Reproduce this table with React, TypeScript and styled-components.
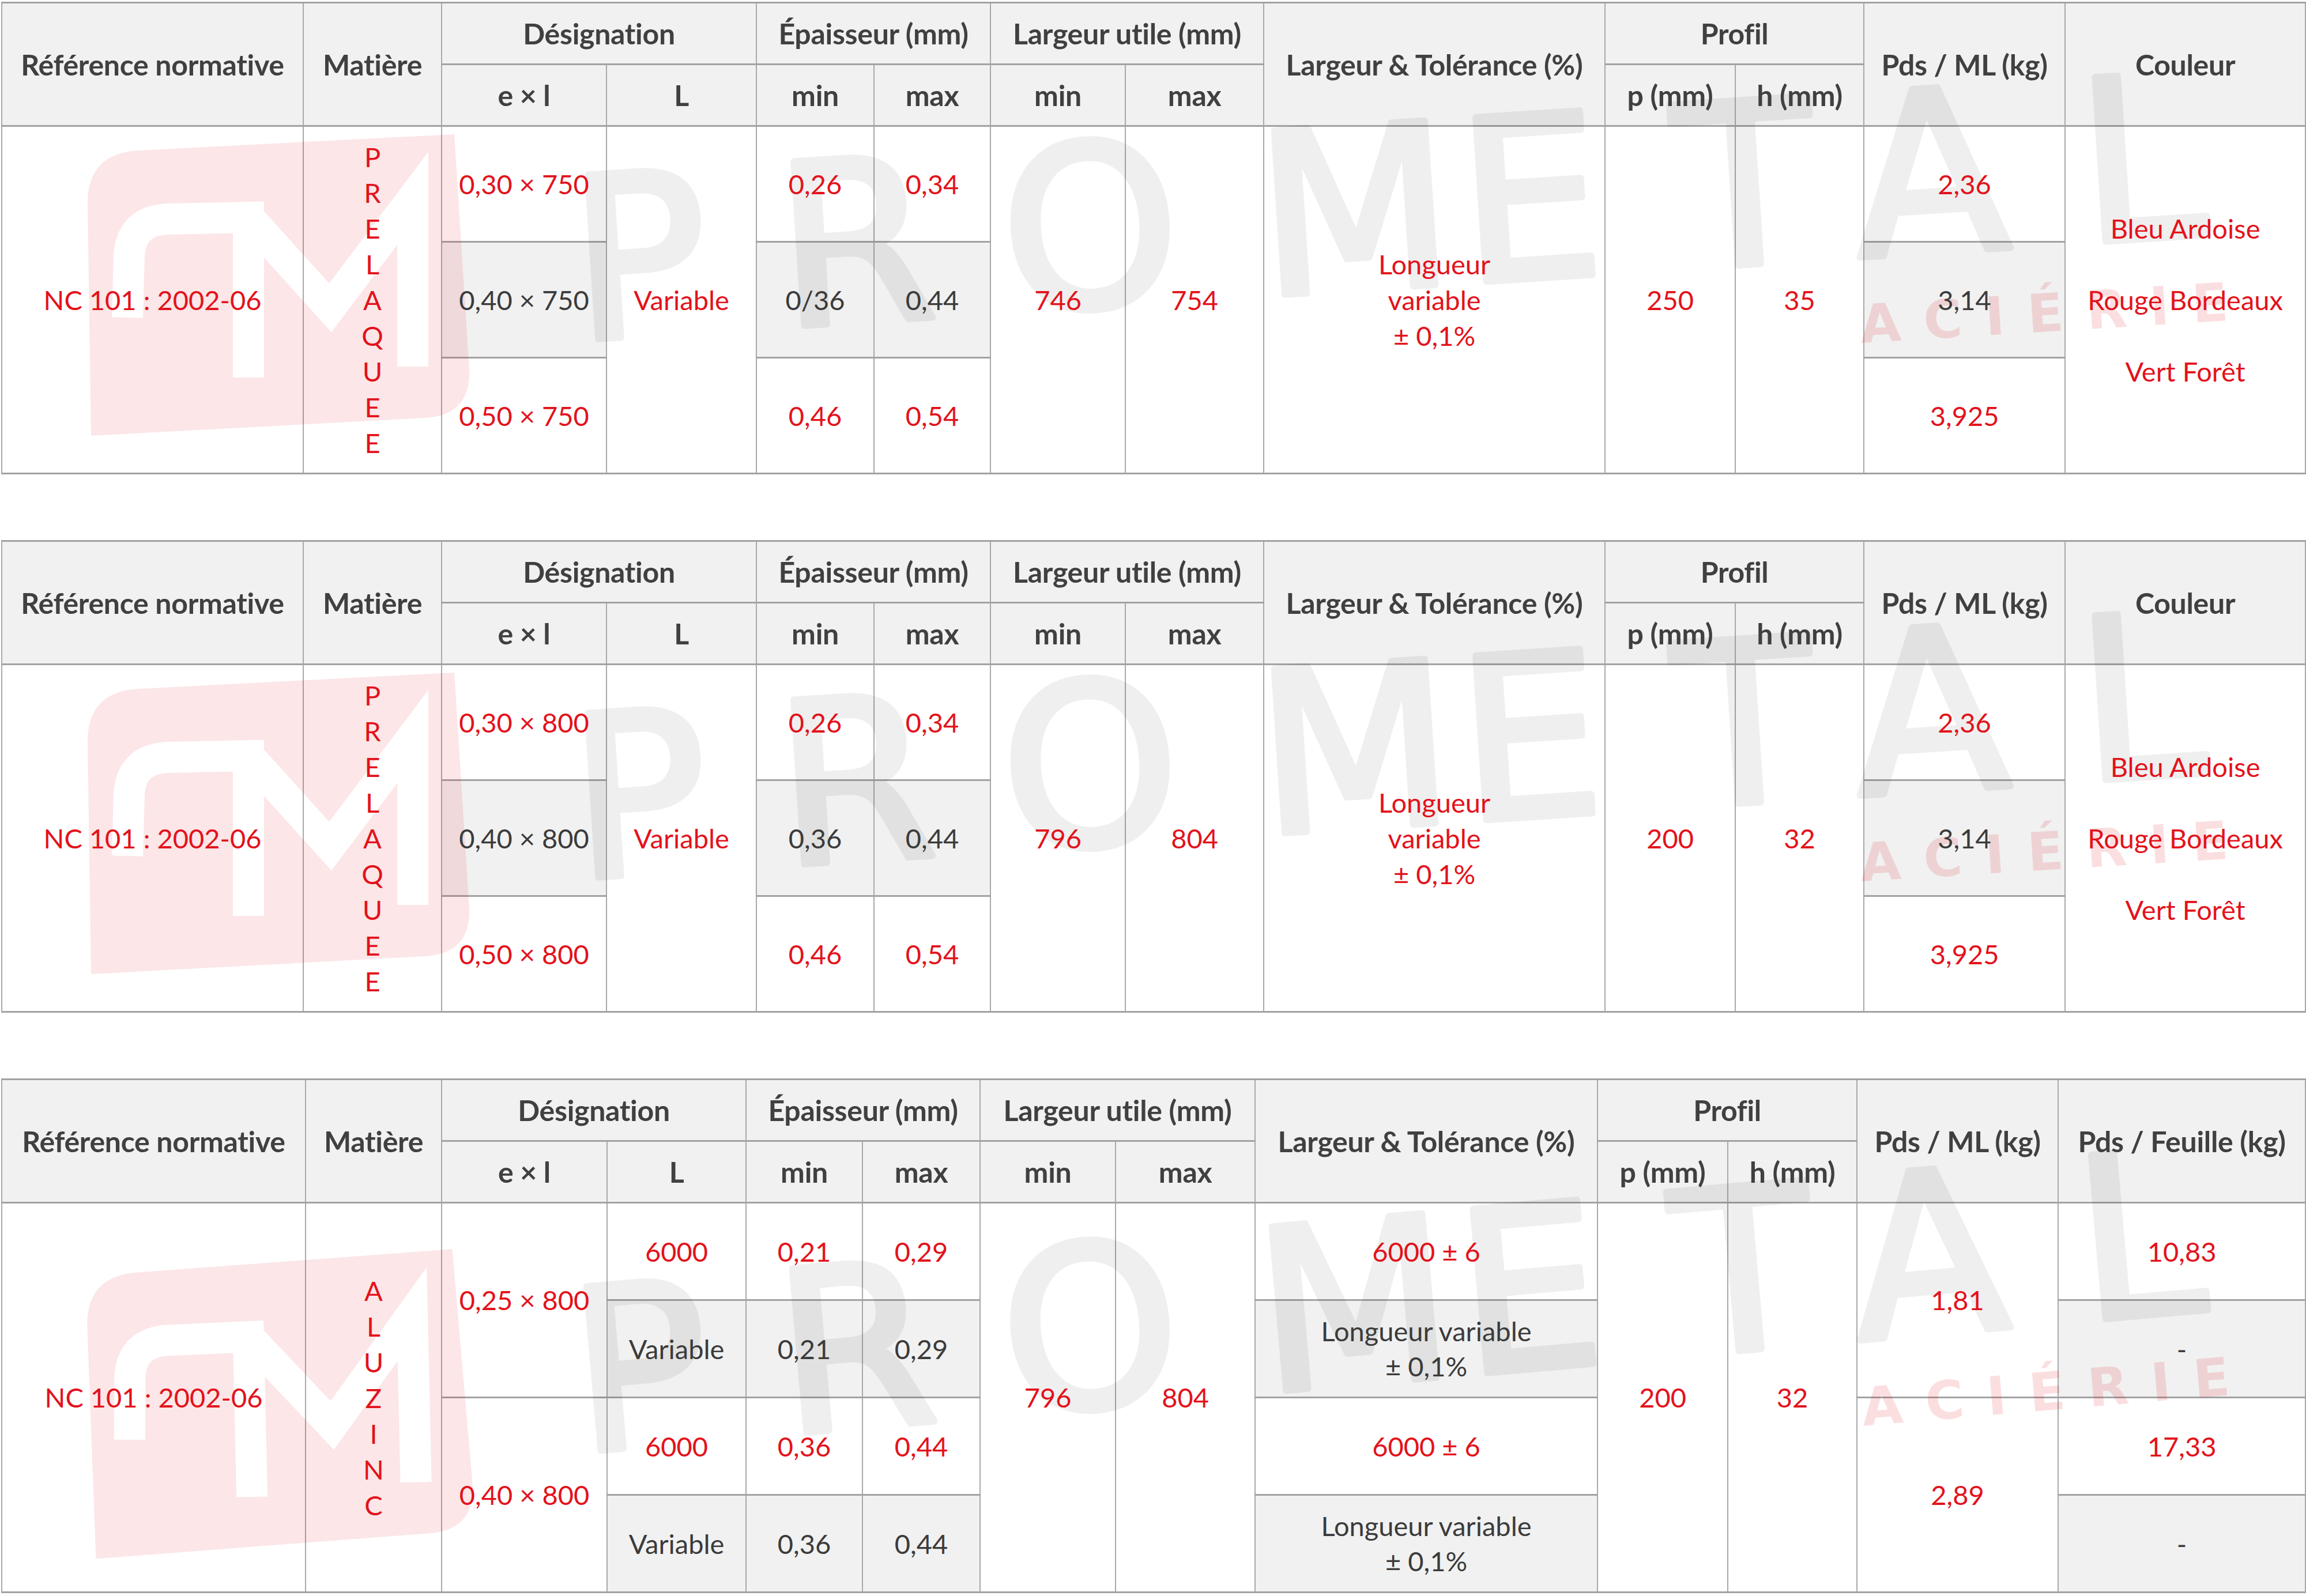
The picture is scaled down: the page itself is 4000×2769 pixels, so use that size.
import React from 'react';
import styled, { createGlobalStyle } from 'styled-components';

const GlobalStyle = createGlobalStyle`
  html, body { margin: 0; padding: 0; background: #ffffff; }
  body { font-family: Lato, "Noto Sans", sans-serif; }
`;

const RED = '#e3121b';
const DARK = '#3b3b3b';
const LINE_H = '#a2a2a2';
const LINE_V = '#a9a9a9';

const Page = styled.div`
  display: flex;
  flex-direction: column;
  gap: 114px;
  padding: 3px 2px 0 2px;
  width: 3996px;
`;

const TableWrap = styled.div`
  position: relative;
  width: 3996px;
`;

const Table = styled.table`
  width: 3996px;
  border-collapse: collapse;
  table-layout: fixed;
  font-family: Lato, "Noto Sans", sans-serif;
`;

const HeadRow = styled.tr`
  height: 107px;
`;

const BodyRow = styled.tr<{ $h: number }>`
  height: ${(p) => p.$h}px;
`;

const Th = styled.th`
  background: #f1f1f1;
  color: #404040;
  font-weight: 700;
  font-size: 50px;
  letter-spacing: -0.3px;
  text-align: center;
  vertical-align: middle;
  padding: 0;
  white-space: nowrap;
  border-top: 3px solid ${LINE_H};
  border-bottom: 3px solid ${LINE_H};
  border-left: 2px solid ${LINE_V};
  border-right: 2px solid ${LINE_V};
`;

const Td = styled.td<{ $shade?: boolean; $dark?: boolean; $lh?: number }>`
  background: ${(p) => (p.$shade ? '#f1f1f1' : '#ffffff')};
  color: ${(p) => (p.$dark ? DARK : RED)};
  font-size: 47px;
  font-weight: 400;
  line-height: ${(p) => (p.$lh ? `${p.$lh}px` : '1.2')};
  text-align: center;
  vertical-align: middle;
  padding: 0;
  white-space: nowrap;
  border-top: 3px solid ${LINE_H};
  border-bottom: 3px solid ${LINE_H};
  border-left: 2px solid ${LINE_V};
  border-right: 2px solid ${LINE_V};
`;

const Label = styled.span`
  position: relative;
  z-index: 2;
  display: inline-block;
`;

const VerticalWord = styled.span`
  position: relative;
  z-index: 2;
  display: inline-flex;
  flex-direction: column;
  align-items: center;
  line-height: 62px;
`;

const WatermarkSvg = styled.svg`
  position: absolute;
  left: 0;
  top: 0;
  z-index: 1;
  pointer-events: none;
  overflow: visible;
`;

type Cell = {
  text: string;
  dark?: boolean;
  shade?: boolean;
  rs?: number;
  lh?: number;
  vertical?: boolean;
};

type TableSpec = {
  id: string;
  cols: number[];
  lastHead: string;
  rowH: number;
  rows: Cell[][];
  wmHeight: number;
  tilt: number;
};

const LETTERS: [string, number][] = [
  ['P', 1116],
  ['R', 1492],
  ['O', 1900],
  ['M', 2360],
  ['E', 2665],
  ['T', 3037],
  ['A', 3360],
  ['L', 3727],
];

const Watermark: React.FC<{ id: string; height: number; tilt: number }> = ({ id, height, tilt }) => (
  <WatermarkSvg width={3996} height={height} viewBox={`0 0 3996 ${height}`}>
    <defs>
      <mask id={id} maskUnits="userSpaceOnUse" x={0} y={0} width={3996} height={height}>
        <rect x={0} y={0} width={3996} height={height} fill="#ffffff" />
        <path
          d="M219 548 L222 440 Q226 379 290 377 L429 374 L429 652 M429 374 L571 531 L714 341 L714 633"
          stroke="#000000"
          strokeWidth={54}
          strokeLinejoin="miter"
          fill="none"
        />
      </mask>
    </defs>
    <g transform={`rotate(${tilt} 3700 420)`}>
      <path
        d="M156 753 L150 350 Q150 262 240 258 L786 230 L812 640 Q814 718 735 722 Z"
        fill="#e30613"
        fillOpacity={0.1}
        mask={`url(#${id})`}
      />
      <g opacity={0.06}>
        <g
          transform="rotate(-3.7 957 590)"
          fill="#000000"
          stroke="#000000"
          strokeWidth={12}
          strokeLinejoin="round"
          fontFamily="'DejaVu Sans', sans-serif"
          fontWeight="normal"
          fontSize={391}
          textAnchor="middle"
        >
          {LETTERS.map(([ch, x]) => (
            <text key={ch + x} x={x} y={590}>
              {ch}
            </text>
          ))}
        </g>
      </g>
      <text
        x={3226}
        y={592}
        transform="rotate(-3.5 3226 592)"
        fontFamily="'DejaVu Sans', sans-serif"
        fontWeight="bold"
        fontSize={92}
        textLength={640}
        lengthAdjust="spacing"
        fill="#e30613"
        fillOpacity={0.13}
      >
        ACIÉRIE
      </text>
    </g>
  </WatermarkSvg>
);

const renderText = (text: string) => {
  const lines = text.split('\n');
  return lines.map((l, i) => (
    <React.Fragment key={i}>
      {l}
      {i < lines.length - 1 && <br />}
    </React.Fragment>
  ));
};

const BodyCell: React.FC<{ cell: Cell }> = ({ cell }) => (
  <Td rowSpan={cell.rs} $shade={cell.shade} $dark={cell.dark} $lh={cell.lh}>
    {cell.vertical ? (
      <VerticalWord>
        {cell.text.split('').map((ch, i) => (
          <span key={i}>{ch}</span>
        ))}
      </VerticalWord>
    ) : (
      <Label>{renderText(cell.text)}</Label>
    )}
  </Td>
);

const H: React.FC<{ children: React.ReactNode; rs?: number; cs?: number }> = ({ children, rs, cs }) => (
  <Th rowSpan={rs} colSpan={cs}>
    <Label>{children}</Label>
  </Th>
);

const SpecTable: React.FC<{ spec: TableSpec }> = ({ spec }) => (
  <TableWrap>
    <Table>
      <colgroup>
        {spec.cols.map((w, i) => (
          <col key={i} style={{ width: `${w}px` }} />
        ))}
      </colgroup>
      <thead>
        <HeadRow>
          <H rs={2}>Référence normative</H>
          <H rs={2}>Matière</H>
          <H cs={2}>Désignation</H>
          <H cs={2}>Épaisseur (mm)</H>
          <H cs={2}>Largeur utile (mm)</H>
          <H rs={2}>Largeur &amp; Tolérance (%)</H>
          <H cs={2}>Profil</H>
          <H rs={2}>Pds / ML (kg)</H>
          <H rs={2}>{spec.lastHead}</H>
        </HeadRow>
        <HeadRow>
          <H>e × l</H>
          <H>L</H>
          <H>min</H>
          <H>max</H>
          <H>min</H>
          <H>max</H>
          <H>p (mm)</H>
          <H>h (mm)</H>
        </HeadRow>
      </thead>
      <tbody>
        {spec.rows.map((row, ri) => (
          <BodyRow key={ri} $h={spec.rowH}>
            {row.map((cell, ci) => (
              <BodyCell key={ci} cell={cell} />
            ))}
          </BodyRow>
        ))}
      </tbody>
    </Table>
    <Watermark id={spec.id} height={spec.wmHeight} tilt={spec.tilt} />
  </TableWrap>
);

const COLS_A = [523, 240, 286, 260, 204, 202, 234, 240, 592, 226, 223, 349, 417];
const COLS_B = [527, 236, 287, 241, 202, 204, 235, 242, 594, 226, 224, 349, 429];

const prelaqueRows = (
  w: string,
  midMin: string,
  luMin: string,
  luMax: string,
  p: string,
  h: string
): Cell[][] => [
  [
    { text: 'NC 101 : 2002-06', rs: 3 },
    { text: 'PRELAQUEE', rs: 3, vertical: true },
    { text: `0,30 × ${w}` },
    { text: 'Variable', rs: 3 },
    { text: '0,26' },
    { text: '0,34' },
    { text: luMin, rs: 3 },
    { text: luMax, rs: 3 },
    { text: 'Longueur\nvariable\n± 0,1%', rs: 3, lh: 62 },
    { text: p, rs: 3 },
    { text: h, rs: 3 },
    { text: '2,36' },
    { text: 'Bleu Ardoise\nRouge Bordeaux\nVert Forêt', rs: 3, lh: 124 },
  ],
  [
    { text: `0,40 × ${w}`, shade: true, dark: true },
    { text: midMin, shade: true, dark: true },
    { text: '0,44', shade: true, dark: true },
    { text: '3,14', shade: true, dark: true },
  ],
  [
    { text: `0,50 × ${w}` },
    { text: '0,46' },
    { text: '0,54' },
    { text: '3,925' },
  ],
];

const aluzincRows: Cell[][] = [
  [
    { text: 'NC 101 : 2002-06', rs: 4 },
    { text: 'ALUZINC', rs: 4, vertical: true },
    { text: '0,25 × 800', rs: 2 },
    { text: '6000' },
    { text: '0,21' },
    { text: '0,29' },
    { text: '796', rs: 4 },
    { text: '804', rs: 4 },
    { text: '6000 ± 6' },
    { text: '200', rs: 4 },
    { text: '32', rs: 4 },
    { text: '1,81', rs: 2 },
    { text: '10,83' },
  ],
  [
    { text: 'Variable', shade: true, dark: true },
    { text: '0,21', shade: true, dark: true },
    { text: '0,29', shade: true, dark: true },
    { text: 'Longueur variable\n± 0,1%', shade: true, dark: true, lh: 61 },
    { text: '-', shade: true, dark: true },
  ],
  [
    { text: '0,40 × 800', rs: 2 },
    { text: '6000' },
    { text: '0,36' },
    { text: '0,44' },
    { text: '6000 ± 6' },
    { text: '2,89', rs: 2 },
    { text: '17,33' },
  ],
  [
    { text: 'Variable', shade: true, dark: true },
    { text: '0,36', shade: true, dark: true },
    { text: '0,44', shade: true, dark: true },
    { text: 'Longueur variable\n± 0,1%', shade: true, dark: true, lh: 61 },
    { text: '-', shade: true, dark: true },
  ],
];

const TABLES: TableSpec[] = [
  {
    id: 'wm-a',
    cols: COLS_A,
    lastHead: 'Couleur',
    rowH: 201,
    rows: prelaqueRows('750', '0/36', '746', '754', '250', '35'),
    wmHeight: 820,
    tilt: 0,
  },
  {
    id: 'wm-b',
    cols: COLS_A,
    lastHead: 'Couleur',
    rowH: 201,
    rows: prelaqueRows('800', '0,36', '796', '804', '200', '32'),
    wmHeight: 820,
    tilt: 0,
  },
  {
    id: 'wm-c',
    cols: COLS_B,
    lastHead: 'Pds / Feuille (kg)',
    rowH: 169,
    rows: aluzincRows,
    wmHeight: 892,
    tilt: -1.3,
  },
];

export default function App() {
  return (
    <>
      <GlobalStyle />
      <Page>
        {TABLES.map((t) => (
          <SpecTable key={t.id} spec={t} />
        ))}
      </Page>
    </>
  );
}
